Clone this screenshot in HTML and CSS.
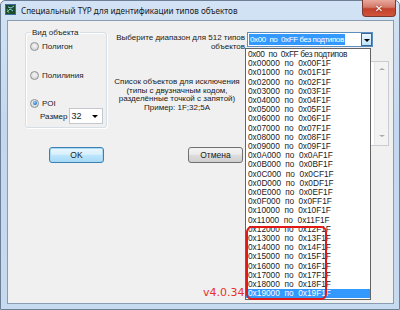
FILE: index.html
```html
<!DOCTYPE html>
<html>
<head>
<meta charset="utf-8">
<link rel="stylesheet" href="styles.css">
</head>
<body>
<div class="window">
  <div class="titlebar">
    <svg class="appicon" width="11" height="11" viewBox="0 0 11 11">
      <rect x="0.5" y="0.5" width="10" height="10" fill="#1f4a2c" stroke="#3a6f9c"/>
      <path d="M2 8 L5 5 L8 7 M3 3 L6 4 L9 2" stroke="#7fd0e8" stroke-width="1" fill="none"/>
      <path d="M2 5 L4 9" stroke="#5fae4a" stroke-width="1"/>
    </svg>
    <span class="title">Специальный TYP для идентификации типов объектов</span>
    <div class="close"><span>✕</span></div>
  </div>
  <div class="client">
    <div class="top">
      <fieldset class="group">
        <legend>Вид объекта</legend>
        <div class="radio r1"><span class="rbtn"></span>Полигон</div>
        <div class="radio r2"><span class="rbtn"></span>Полилиния</div>
        <div class="radio r3"><span class="rbtn on"></span>POI</div>
        <div class="size"><span>Размер</span><div class="smallcombo">32<span class="arrow"></span></div></div>
      </fieldset>
      <div class="right">
        <div class="row1">
          <div class="lbl1">Выберите диапазон для 512 типов<br>объектов</div>
          <div class="combo"><span class="sel">0x00  по  0xFF без подтипов</span><span class="dbtn"><span class="arrow"></span></span></div>
        </div>
        <div class="row2">
          <div class="lbl2">Список объектов для исключения<br>(типы с двузначным кодом,<br>разделённые точкой с запятой)<br>Пример:  1F;32;5A</div>
          <div class="textarea"><div class="vscroll"><span class="up"></span><span class="down"></span></div></div>
        </div>
      </div>
    </div>
    <div class="buttons">
      <div class="btn ok">OK</div>
      <div class="btn cancel">Отмена</div>
    </div>
    <div class="version">v4.0.34</div>
    <div class="dropdown">
      <div class="item first">0x00  по  0xFF без подтипов</div>
      <div class="item">0x00000  по  0x00F1F</div>
      <div class="item">0x01000  по  0x01F1F</div>
      <div class="item">0x02000  по  0x02F1F</div>
      <div class="item">0x03000  по  0x03F1F</div>
      <div class="item">0x04000  по  0x04F1F</div>
      <div class="item">0x05000  по  0x05F1F</div>
      <div class="item">0x06000  по  0x06F1F</div>
      <div class="item">0x07000  по  0x07F1F</div>
      <div class="item">0x08000  по  0x08F1F</div>
      <div class="item">0x09000  по  0x09F1F</div>
      <div class="item">0x0A000  по  0x0AF1F</div>
      <div class="item">0x0B000  по  0x0BF1F</div>
      <div class="item">0x0C000  по  0x0CF1F</div>
      <div class="item">0x0D000  по  0x0DF1F</div>
      <div class="item">0x0E000  по  0x0EF1F</div>
      <div class="item">0x0F000  по  0x0FF1F</div>
      <div class="item">0x10000  по  0x10F1F</div>
      <div class="item">0x11000  по  0x11F1F</div>
      <div class="item">0x12000  по  0x12F1F</div>
      <div class="item">0x13000  по  0x13F1F</div>
      <div class="item">0x14000  по  0x14F1F</div>
      <div class="item">0x15000  по  0x15F1F</div>
      <div class="item">0x16000  по  0x16F1F</div>
      <div class="item">0x17000  по  0x17F1F</div>
      <div class="item">0x18000  по  0x18F1F</div>
      <div class="item hl">0x19000  по  0x19F1F</div>
      <div class="redframe"></div>
    </div>
  </div>
</div>
</body>
</html>
```
FILE: styles.css
```css
* { box-sizing: border-box; }
html, body { margin: 0; padding: 0; }
body {
  width: 400px; height: 310px; overflow: hidden;
  background: #ffffff;
  font-family: "Liberation Sans", Arial, sans-serif;
  font-size: 8px;
  color: #1a1a1a;
}
.window {
  width: 400px; height: 310px;
  background: linear-gradient(180deg, #d3e3f5 0%, #c3d8ef 40%, #c6daf0 100%);
  border: 1px solid #6d7f94;
  border-radius: 5px 5px 0 0;
  position: relative;
  padding: 0 5px 5px 6px;
  display: flex; flex-direction: column;
}
.titlebar {
  height: 19px;
  display: flex; align-items: center;
  position: relative;
}
.appicon { margin-left: -2px; margin-right: 5px; margin-top: -2px; }
.title {
  font-family: "Noto Sans", "DejaVu Sans", sans-serif;
  font-size: 8.15px;
  margin-top: -1px;
}
.close {
  position: absolute; right: -2px; top: -1px;
  width: 34px; height: 17px;
  border: 1px solid #7a3a32;
  border-top: none;
  border-radius: 0 0 4px 4px;
  background: linear-gradient(180deg, #e9a99c 0%, #d47a68 45%, #c3412c 55%, #d1553c 100%);
  display: flex; align-items: center; justify-content: center;
  color: #fff; font-size: 10px; font-weight: bold;
  font-family: "DejaVu Sans", sans-serif;
  text-shadow: 0 0 2px #5a1a12;
}
.client {
  flex: 1;
  background: #f0f0f0;
  border: 1px solid #8a9cb2;
  position: relative;
  padding: 7px 0 0 17px;
}
.top { display: flex; align-items: flex-start; }
.group {
  width: 82px; height: 100px;
  margin: 0; padding: 0 0 0 4px;
  border: 1px solid #d5dfe5;
  border-radius: 3px;
  box-shadow: inset 1px 1px 0 #fff, 1px 1px 0 #fff;
}
.group legend {
  padding: 0 1px; margin-left: 1px;
  font-size: 8px; line-height: 9px;
}
.radio {
  display: flex; align-items: center;
  height: 10px;
}
.r1 { margin-top: 4px; }
.r2 { margin-top: 19px; }
.r3 { margin-top: 18px; }
.rbtn {
  width: 9px; height: 9px; border-radius: 50%;
  border: 1px solid #8d9297;
  background: radial-gradient(circle at 50% 40%, #f6f6f6 0%, #d9d9d9 70%, #cfcfcf 100%);
  margin-right: 3px;
  position: relative;
}
.rbtn.on::after {
  content: ""; position: absolute; left: 1.5px; top: 1.5px;
  width: 4px; height: 4px; border-radius: 50%;
  background: radial-gradient(circle at 40% 35%, #8fd3ff 0%, #2a7fd4 60%, #1b5aa5 100%);
}
.size {
  display: flex; align-items: center;
  margin-top: 0; margin-left: 10px;
}
.smallcombo {
  width: 34px; height: 16px;
  margin-left: 1px;
  background: #fff;
  border: 1px solid #c4c8cc;
  padding-left: 2px;
  display: flex; align-items: center;
  font-size: 9px;
  position: relative;
}
.arrow {
  position: absolute;
  width: 0; height: 0;
  border-left: 3px solid transparent;
  border-right: 3px solid transparent;
  border-top: 3px solid #000;
}
.smallcombo .arrow { right: 4px; top: 6px; }
.right { margin-left: 2px; margin-top: 4px; }
.row1 { display: flex; align-items: flex-start; }
.lbl1 {
  width: 136px;
  text-align: right;
  line-height: 9px;
  padding-top: 1px;
}
.combo {
  width: 126px; height: 15px;
  margin-left: 2px;
  background: #fff;
  border: 1px solid #5a8fc0;
  position: relative;
  padding: 1px 0 0 1px;
}
.sel {
  display: inline-block;
  background: #3399ff; color: #fff;
  white-space: pre;
  line-height: 11px;
  padding: 0 1px;
  font-size: 8px;
  letter-spacing: -0.4px;
}
.dbtn {
  position: absolute; right: 0; top: 0;
  width: 11px; height: 13px;
  border: 1px solid #3c6a96;
  background: linear-gradient(180deg, #eaf6fd, #bee6fd);
}
.dbtn .arrow { left: 2px; top: 5px; }
.row2 { display: flex; margin-top: 10px; }
.lbl2 {
  width: 136px;
  text-align: center;
  line-height: 8.7px;
  padding-top: 17px;
}
.textarea {
  width: 142px; height: 85px;
  margin-left: 2px;
  background: #fff;
  border: 1px solid #c9ccd1;
  position: relative;
}
.vscroll {
  position: absolute; right: 0; top: 0; bottom: 0;
  width: 14px;
  background: #f3f3f3;
  border-left: 1px solid #e6e6e6;
}
.vscroll .up, .vscroll .down {
  position: absolute; left: 4px;
  width: 0; height: 0;
  border-left: 3px solid transparent;
  border-right: 3px solid transparent;
}
.vscroll .up { top: 6px; border-bottom: 2px solid #a9a9a9; }
.vscroll .down { bottom: 8px; border-top: 2px solid #a9a9a9; }
.buttons {
  display: flex;
  margin-top: 1px;
  margin-left: 24px;
}
.btn {
  width: 55px; height: 16px;
  border-radius: 3px;
  display: flex; align-items: center; justify-content: center;
  background: linear-gradient(180deg, #f3f3f3 0%, #ebebeb 45%, #dddddd 50%, #cfcfcf 100%);
  font-size: 8.5px;
}
.ok {
  border: 1px solid #3c7fb1;
  box-shadow: inset 0 0 0 1px #a7d9f5;
  background: linear-gradient(180deg, #eaf6fd 0%, #d9f0fc 45%, #bee6fd 50%, #a7d9f5 100%);
}
.cancel {
  border: 1px solid #707070;
  margin-left: 84px;
}
.version {
  position: absolute;
  left: 195px; top: 265px;
  color: #e8322a;
  font-size: 11px;
  font-family: "DejaVu Sans", sans-serif;
}
.dropdown {
  position: absolute;
  left: 237px; top: 27px;
  width: 126px; height: 252px;
  background: #fff;
  border: 1px solid #646464;
  padding: 1px 0 0 0;
}
.item {
  white-space: pre;
  height: 9.21px;
  line-height: 9.21px;
  padding-left: 2px;
  font-size: 8.3px;
}
.item.first { letter-spacing: -0.35px; }
.item.hl { background: #3399ff; color: #fff; }
.redframe {
  position: absolute;
  left: 0px; top: 177px;
  width: 81px; height: 74px;
  border: 2px solid #e01818;
  border-radius: 6px;
}
```
